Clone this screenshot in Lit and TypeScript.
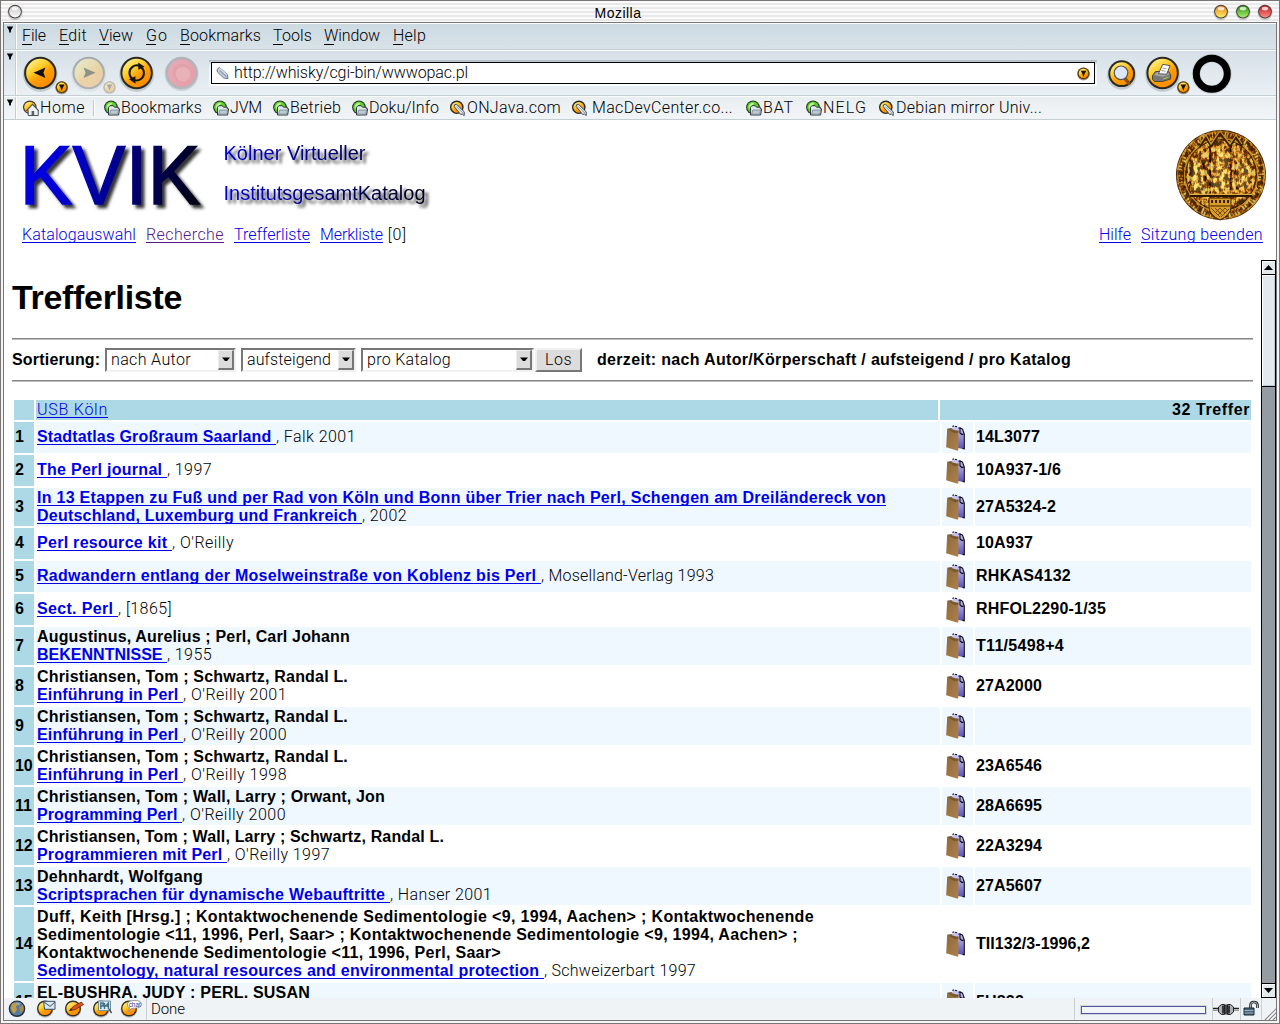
import { LitElement, html, css, svg, nothing } from "lit";
import { customElement, property } from "lit/decorators.js";

/* A run of text whose tracking is adjusted so that it fills a given advance width. */
@customElement("fit-text")
class FitText extends LitElement {
  @property({ type: Number }) w = 0;
  @property() text = "";
  static styles = css`
    :host { display: inline-block; white-space: pre; }
    .run { white-space: pre; }
  `;
  render() {
    return html`<span class="run">${this.text}</span>`;
  }
  updated() {
    const run = this.renderRoot.querySelector(".run") as HTMLElement;
    run.style.letterSpacing = "0px";
    const natural = run.getBoundingClientRect().width;
    if (this.w && this.text.length) {
      run.style.letterSpacing = `${(this.w - natural) / this.text.length}px`;
    }
  }
}

const fit = (text: string, w: number, cls = "") =>
  html`<fit-text class=${cls} .text=${text} .w=${w}></fit-text>`;

const defs = svg`
  <defs>
    <linearGradient id="shine" x1="0" y1="0" x2=".7" y2="1">
      <stop offset="0" stop-color="#fff9b0"/><stop offset=".4" stop-color="#ffd030"/>
      <stop offset=".65" stop-color="#ff9d00"/><stop offset="1" stop-color="#ff8a00"/>
    </linearGradient>
    <linearGradient id="rose" x1="0" y1="0" x2="1" y2="1">
      <stop offset="0" stop-color="#ee9aa6"/><stop offset="1" stop-color="#e8808e"/>
    </linearGradient>
  </defs>`;

const disc = (cx: number, cy: number, r: number, fill = "url(#shine)") => svg`
  <circle cx=${cx} cy=${cy + 1.5} r=${r + 1.2} fill="#7d8b95" opacity=".35"/>
  <circle cx=${cx} cy=${cy} r=${r} fill="#2b2a22"/>
  <circle cx=${cx} cy=${cy} r=${r - 2} fill=${fill}/>`;

const badge = (cx: number, cy: number) => svg`
  <circle cx=${cx} cy=${cy + 0.6} r="6.5" fill="#5a4a20" opacity=".5"/>
  <circle cx=${cx} cy=${cy} r="6" fill="#5c4310"/>
  <circle cx=${cx} cy=${cy} r="4.7" fill="url(#shine)"/>
  <path d="M${cx - 2.8} ${cy - 2.6}h5.6l-1.6 2.8l-1.2 3.4l-1.2-3.4z" fill="#111"/>`;

const backIcon = html`<svg class="tool" width="48" height="44" viewBox="22 51 48 44">${defs}
  ${disc(40.3, 73, 16.2)}<path d="M33.5 72.7L45.5 67.5L43.4 72.7L45.5 78z" fill="#111"/>${badge(61.7, 87.2)}</svg>`;
const forwardIcon = html`<svg class="tool" width="48" height="44" viewBox="70 51 48 44">${defs}
  <g opacity=".3">${disc(88.7, 73, 16.2)}${badge(109.5, 87.2)}</g>
  <path d="M95.5 72.7L83.5 67.5L85.6 72.7L83.5 78z" fill="#6f7a80" opacity=".75"/></svg>`;
const reloadIcon = html`<svg class="tool" width="46" height="44" viewBox="118 51 46 44">${defs}
  ${disc(136.6, 73, 16.2)}
  <g fill="none" stroke="#151515" stroke-width="2"><path d="M133 79.200A7.400 7.400 0 0 1 132.500 66.900Q135.500 64.500 139.500 65.800"/><path d="M140.300 66.700A7.400 7.400 0 0 1 140.900 79Q138 81.300 134 80.100"/></g>
  <path d="M138.200 62.400l6.300 4.400l-6.200 2.900z M135.500 83.700l-6.300-4.500l6.200-2.900z" fill="#151515"/></svg>`;
const stopIcon = html`<svg class="tool" width="47" height="44" viewBox="164 51 47 44">${defs}
  <g opacity=".75"><circle cx="181.6" cy="74" r="17" fill="#c3ccd1"/><circle cx="181.6" cy="73" r="16.2" fill="#a5a5a9"/>
  <circle cx="181.6" cy="73" r="13.600" fill="url(#rose)"/><circle cx="182" cy="73" r="9.300" fill="#df8c94"/>
  <circle cx="183" cy="74" r="7.300" fill="#eaa0a6"/></g></svg>`;
const searchIcon = html`<svg class="tool" width="45" height="44" viewBox="1099 51 45 44">${defs}
  ${disc(1121.7, 73.7, 13.4)}
  <path d="M1125 78.5l4 5" stroke="#8a5205" stroke-width="3.4" stroke-linecap="round"/>
  <circle cx="1121" cy="72.8" r="6.8" fill="#dbe6f8" stroke="#555" stroke-width="1.2"/></svg>`;
const printIcon = html`<svg class="tool" width="47" height="44" viewBox="1144 51 47 44">${defs}
  ${disc(1162.6, 73, 16.2)}
  <path d="M1152.5 75.5l3-4h13l2.2 3.4v4l-8 2.6h-8l-2.2-2z" fill="#777" stroke="#333" stroke-width=".8"/>
  <path d="M1154 75l3-3h11l1.5 2.4l-7 2.4z" fill="#a9a9a9"/>
  <path d="M1158.5 73.8l4.2-9.4l7.4 1.2l-3.4 8.6z" fill="#fff" stroke="#444" stroke-width=".9"/>
  <path d="M1162.5 68l4 .8M1161.5 70.5l4 .8" stroke="#888" stroke-width=".8"/>
  <path d="M1163 79l5.5-1.8" stroke="#9c4" stroke-width="1.1"/>${badge(1183.3, 87.2)}</svg>`;
const throbber = html`<svg class="tool" width="44" height="44" viewBox="1191 51 44 44">
  <circle cx="1211.8" cy="73.8" r="15.7" fill="none" stroke="#9aa" stroke-width="8.6" opacity=".35"/>
  <circle cx="1211.8" cy="73.8" r="15.5" fill="none" stroke="#000" stroke-width="7"/></svg>`;

const bookIcons: Record<string, unknown> = {
  home: html`<svg width="17" height="17" viewBox="0 0 17 17">${defs}
    <circle cx="6.8" cy="7.3" r="6.8" fill="#3a3a30"/><circle cx="6.8" cy="7.3" r="5.6" fill="url(#shine)"/>
    <path d="M4 10.3L9.5 4.6l5.7 5.7v5.2H5.2v-5z" fill="#eef2f5" stroke="#4b555c" stroke-width="1"/>
    <path d="M3.3 10.8L9.5 4.2l6.3 6.6" fill="none" stroke="#4b555c" stroke-width="1.1"/>
    <path d="M8.6 15v-4h2.6v4" fill="#59646c"/></svg>`,
  folder: html`<svg width="17" height="17" viewBox="0 0 17 17">
    <circle cx="7" cy="7.3" r="6.9" fill="#2c352b"/><circle cx="7" cy="7.3" r="5.8" fill="#5cce2a"/><path d="M2.500 7.300a4.600 4.600 0 0 1 6-4.200L4 9.300z" fill="#bdf58f"/>
    <path d="M4.500 15V7.200l1.400-1.500h3.300l1.300 1.500h3.800v1.600h1.300l-1 6.200z" fill="#dfe7ec" stroke="#303a41" stroke-width="1"/>
    <path d="M5.500 14.200L6.800 10h7.800l-.9 4.200z" fill="#bccad3" stroke="#6b7a84" stroke-width=".7"/></svg>`,
  link: html`<svg width="17" height="17" viewBox="0 0 17 17">${defs}
    <circle cx="6.8" cy="7.3" r="6.8" fill="#2c2a25"/><circle cx="6.8" cy="7.3" r="5.4" fill="url(#shine)"/>
    <path d="M4.200 6.600q-.4-2.600 2.400-2.200l7.600 7.400v3.800l-1.800-1.500l-1.800.3z" fill="#dfe8ee" stroke="#3d4a54" stroke-width="1"/>
    <path d="M6.400 6.600l6.400 6.400" stroke="#8fa2b0" stroke-width="1"/></svg>`,
};

const bagIcon = html`<svg class="bag" width="20" height="27" viewBox="0 0 20 27">
  <defs><linearGradient id="paper" x1="0" y1="0" x2="0" y2="1"><stop offset="0" stop-color="#cfcdf8"/><stop offset="1" stop-color="#5652b0"/></linearGradient>
  <linearGradient id="bag" x1="0" y1="0" x2="1" y2="1"><stop offset="0" stop-color="#8c693c"/><stop offset="1" stop-color="#b08149"/></linearGradient></defs>
  <path d="M6 4L7 1l7 1l4 6V24l-6-1V6z" fill="url(#paper)"/>
  <path d="M6.500 1.500l1.500-.8M9 1.200l2 .6M12.500 3.300l1.500-.5l2.500 1.400L18.300 9v14.800l-1.800-.4M14 3.500v4.500l2 1.500l1.500-.6" fill="none" stroke="#0b0a20" stroke-width="1.100"/>
  <path d="M1.200 3.800L12.400 5.600v19.200l-.8 1L.2 22.200z" fill="url(#bag)"/>
  <path d="M1.200 3.800l4.300-.9 7 2.900v1.600l-4 .8z" fill="#77592f"/><path d="M5.300 4l1.700-1.600 5 1.800-.6 1.600z" fill="#c9c3ee"/></svg>`;

const MENU: [string, number, number][] = [
  ["File", 24, 13], ["Edit", 28, 12], ["View", 34, 13], ["Go", 22, 12],
  ["Bookmarks", 81, 12], ["Tools", 39, 12], ["Window", 56, 13], ["Help", 33, 0],
];

/* icon, gap between icon and label, label, label width, gap after label */
const BOOKMARKS: [string, number, string, number, number][] = [
  ["folder", 0, "Bookmarks", 81, 11], ["folder", 0, "JVM", 32, 11],
  ["folder", 0, "Betrieb", 51, 11], ["folder", 0, "Doku/Info", 70, 11],
  ["link", 0, "ONJava.com", 94, 11], ["link", 3, "MacDevCenter.co...", 141, 13],
  ["folder", 0, "BAT", 31, 12], ["folder", 0, "NELG", 44, 12],
  ["link", 0, "Debian mirror Univ...", 146, 0],
];

interface Hit {
  n: number; h: number; authors?: [string, number][]; title: [string, number][];
  tail?: [string, number]; sig?: [string, number];
}
const HITS: Hit[] = [
  { n: 1, h: 31, title: [["Stadtatlas Großraum Saarland ", 239]], tail: [", Falk 2001", 80], sig: ["14L3077", 64] },
  { n: 2, h: 31, title: [["The Perl journal ", 130]], tail: [", 1997", 45], sig: ["10A937-1/6", 85] },
  { n: 3, h: 38, title: [["In 13 Etappen zu Fuß und per Rad von Köln und Bonn über Trier nach Perl, Schengen am Dreiländereck von", 849], ["Deutschland, Luxemburg und Frankreich ", 325]], tail: [", 2002", 45], sig: ["27A5324-2", 80] },
  { n: 4, h: 31, title: [["Perl resource kit ", 135]], tail: [", O'Reilly", 62], sig: ["10A937", 57] },
  { n: 5, h: 31, title: [["Radwandern entlang der Moselweinstraße von Koblenz bis Perl ", 504]], tail: [", Moselland-Verlag 1993", 173], sig: ["RHKAS4132", 95] },
  { n: 6, h: 31, title: [["Sect. Perl ", 81]], tail: [", [1865]", 54], sig: ["RHFOL2290-1/35", 130] },
  { n: 7, h: 38, authors: [["Augustinus, Aurelius ; Perl, Carl Johann", 313]], title: [["BEKENNTNISSE ", 130]], tail: [", 1955", 45], sig: ["T11/5498+4", 88] },
  { n: 8, h: 38, authors: [["Christiansen, Tom ; Schwartz, Randal L.", 311]], title: [["Einführung in Perl ", 146]], tail: [", O'Reilly 2001", 104], sig: ["27A2000", 66] },
  { n: 9, h: 38, authors: [["Christiansen, Tom ; Schwartz, Randal L.", 311]], title: [["Einführung in Perl ", 146]], tail: [", O'Reilly 2000", 104] },
  { n: 10, h: 38, authors: [["Christiansen, Tom ; Schwartz, Randal L.", 311]], title: [["Einführung in Perl ", 146]], tail: [", O'Reilly 1998", 104], sig: ["23A6546", 66] },
  { n: 11, h: 38, authors: [["Christiansen, Tom ; Wall, Larry ; Orwant, Jon", 348]], title: [["Programming Perl ", 145]], tail: [", O'Reilly 2000", 104], sig: ["28A6695", 66] },
  { n: 12, h: 38, authors: [["Christiansen, Tom ; Wall, Larry ; Schwartz, Randal L.", 407]], title: [["Programmieren mit Perl ", 190]], tail: [", O'Reilly 1997", 103], sig: ["22A3294", 66] },
  { n: 13, h: 38, authors: [["Dehnhardt, Wolfgang", 166]], title: [["Scriptsprachen für dynamische Webauftritte ", 353]], tail: [", Hanser 2001", 102], sig: ["27A5607", 66] },
  { n: 14, h: 74, authors: [["Duff, Keith [Hrsg.] ; Kontaktwochenende Sedimentologie <9, 1994, Aachen> ; Kontaktwochenende", 777], ["Sedimentologie <11, 1996, Perl, Saar> ; Kontaktwochenende Sedimentologie <9, 1994, Aachen> ;", 761], ["Kontaktwochenende Sedimentologie <11, 1996, Perl, Saar>", 464]], title: [["Sedimentology, natural resources and environmental protection ", 507]], tail: [", Schweizerbart 1997", 152], sig: ["TII132/3-1996,2", 114] },
  { n: 15, h: 38, authors: [["EL-BUSHRA, JUDY ; PERL, SUSAN", 273]], title: [], sig: ["5U832", 48] },
];

const titleButton = (id: string, top: string, bottom: string) => html`
  <svg width="16" height="18" viewBox="0 0 16 18"><defs><linearGradient id=${id} x1="0" y1="0" x2="0" y2="1">
    <stop offset="0" stop-color=${top}/><stop offset="1" stop-color=${bottom}/></linearGradient></defs>
    <circle cx="8" cy="9.6" r="7.6" fill="#aaa" opacity=".55"/><circle cx="8" cy="8.6" r="6.900" fill="#4a4440"/>
    <circle cx="8" cy="8.6" r="5.900" fill=${`url(#${id})`}/><ellipse cx="8" cy="5.6" rx="3.2" ry="1.9" fill="#fff" opacity=".75"/></svg>`;

const seal = html`<svg class="seal" width="92" height="92" viewBox="0 0 92 92">
  <defs>
    <radialGradient id="sealbase"><stop offset="0" stop-color="#d9a63a"/><stop offset=".65" stop-color="#bb7d1b"/><stop offset="1" stop-color="#8a4f08"/></radialGradient>
    <filter id="grain" x="0" y="0" width="1" height="1" color-interpolation-filters="sRGB">
      <feTurbulence type="fractalNoise" baseFrequency=".26 .17" numOctaves="3" seed="8" result="t"/>
      <feColorMatrix in="t" type="matrix" values="4.600 0 0 0 -1.600  4.200 0 0 0 -1.700  2.400 0 0 0 -1.100  0 0 0 0 1" result="c"/>
      <feComposite in="c" in2="SourceGraphic" operator="in"/>
    </filter>
  </defs>
  <circle cx="46" cy="46" r="45" fill="#4b2903"/>
  <circle cx="46" cy="46" r="44.3" fill="url(#sealbase)"/>
  <g fill="#f0d468" opacity=".85"><circle cx="46" cy="24" r="4"/><path d="M41 29h11l3 31H38z"/><circle cx="22" cy="33" r="3.500"/><path d="M18 37h8l4 25H17z"/><circle cx="69" cy="31" r="3.500"/><path d="M65 35h8l3 24H61z"/></g>
  <g stroke="#4d2a05" stroke-width="2" fill="none"><path d="M35 14v50M56 14v50M28 34l3 12-2 16M61 34l-2 12 3 14M15 34v26"/></g>
  <circle cx="46" cy="46" r="44.3" fill="#fff" filter="url(#grain)" opacity=".6"/>
  <circle cx="46" cy="46" r="40.5" fill="none" stroke="#4a2804" stroke-width="5" stroke-dasharray="1.3 1.8" opacity=".75"/>
  <circle cx="46" cy="46" r="43.4" fill="none" stroke="#c98b1e" stroke-width="1" opacity=".8"/>
  <circle cx="46" cy="46" r="36.5" fill="none" stroke="#c98b1e" stroke-width="1.2"/>
  <circle cx="46" cy="46" r="35.3" fill="none" stroke="#3e2002" stroke-width="1"/>
  <path d="M25 17L31 8l5 9 9-13 10 13 6-9 6 9" fill="none" stroke="#3a1e02" stroke-width="2.4"/>
  <path d="M25 15L31 6l5 9 9-13 10 13 6-9 6 9" fill="none" stroke="#c8932c" stroke-width="1.2"/>
  <path d="M15 67h62" stroke="#2e1701" stroke-width="2"/><path d="M15 65.4h62" stroke="#e0ae3c" stroke-width="1.2"/>
  <path d="M34 69h22v9q0 8-11 13q-11-5-11-13z" fill="#d99c27" stroke="#3b1e02" stroke-width="1"/>
  <path d="M35 77h20" stroke="#3b1e02"/><path d="M36 72.500h18" stroke="#3b1e02" stroke-width="3" stroke-dasharray="2 2"/>
  <path d="M36 79l9 9M40 79l7 7M45 79l5 5M50 79l3 3M54 80l-8 8M50 79l-7 7M45 79l-5 5" stroke="#5b3506" stroke-width=".8"/></svg>`;

const statusDisc = svg`<circle cx="9" cy="10.4" r="8.3" fill="#8f8f8a" opacity=".5"/><circle cx="9" cy="9.5" r="8" fill="#39301d"/><circle cx="9" cy="9.5" r="6.6" fill="url(#shine)"/>`;
const statusIcons = [
  html`<svg width="28" height="20" viewBox="0 0 28 20"><circle cx="9" cy="9.8" r="8.3" fill="#24303e"/><circle cx="9" cy="9.6" r="7" fill="#567ba3"/>
    <path d="M4 4.8q4-2 6 0l-2 3 1 3-3 4q-3-3-3.4-6z" fill="#c39a4a"/><path d="M11 8l4-2 .6 5-3 3.400z" fill="#a78b4c"/><path d="M8 3.400l5 1-3 2z" fill="#8fb2cf"/></svg>`,
  html`<svg width="28" height="20" viewBox="0 0 28 20">${defs}${statusDisc}<path d="M7.500 2.300h11.500v8H8.600z" fill="#d9e6f0" stroke="#3c5163"/><path d="M8 3l6 4.400L19 3" fill="none" stroke="#3c5163"/></svg>`,
  html`<svg width="28" height="20" viewBox="0 0 28 20">${defs}${statusDisc}<path d="M6 11.400l3.200-3.800L17.400 3l2.200 2.400-8.400 5.200z" fill="#dc5426" stroke="#6e2508" stroke-width=".8"/><path d="M5 12l2-3 1.800 2z" fill="#332"/></svg>`,
  html`<svg width="28" height="20" viewBox="0 0 28 20">${defs}${statusDisc}<path d="M6.500 2h12v9.600h-12z" fill="#d9ebf1" stroke="#6f8fa0"/><path d="M8.800 10V4h2.400v3H9M12.500 10V4M13 7h4M16.400 10V4l-2.400 3" stroke="#466f86" stroke-width="1.400" fill="none"/><path d="M17 10l2.600 4" stroke="#456" stroke-width="1.400"/></svg>`,
  html`<svg width="26" height="20" viewBox="0 0 26 20">${defs}${statusDisc}<path d="M8 13l2-4q-3-1-2.600-4Q8 1.600 14.600 1.500t7 3.800q-.4 3.700-7 3.900l-3 .2z" fill="#fdfdff" stroke="#999"/>
    <text x="8.700" y="7.600" font-size="6.400" textLength="12" fill="#3f3d86" font-family="Liberation Sans, sans-serif">chat</text></svg>`,
];

@customElement("app-root")
class AppRoot extends LitElement {
  static styles = css`
    :host { display: block; width: 1280px; height: 1024px; overflow: hidden; font-family: Roboto, "Liberation Sans", Arial, sans-serif; font-weight: 300; font-size: 16px; color: #000; }
    * { box-sizing: border-box; }
    svg { display: block; flex: none; }
    .window { width: 1280px; height: 1024px; border: 1px solid #7a7676; background: #f4f4f4; display: flex; flex-direction: column; }
    .titlebar { height: 21px; flex: none; display: flex; justify-content: space-between; padding: 2px 6px 0 6px;
      background: repeating-linear-gradient(#fbfbfb 0 2px, #e9e9e9 2px 4px); }
    .titlebar .caption { font-family: "Liberation Sans", Arial, sans-serif; font-weight: 400; font-size: 14px; line-height: 20px; padding-right: 44px; }
    .titlebar .group { display: flex; gap: 6px; width: 62px; }
    .titlebar .group.end { justify-content: flex-end; }
    .frame { flex: 1; margin: 0 2px 2px; border: 1px solid #7a7676; border-top: 1px solid #77777a; display: flex; flex-direction: column; overflow: hidden; background: #fff; min-height: 0; }
    .bar { display: flex; flex: none; border-bottom: 1px solid #c3cfd3; border-top: 1px solid #fbfdfd; }
    .grip { width: 11px; flex: none; border-right: 1px solid #c3cfd3; margin-left: 1px; }
    .grip svg { margin: 2px 0 0 1px; }
    .barbody { flex: 1; display: flex; align-items: center; border-left: 1px solid #fff; padding-left: 5px; }
    .menubar { height: 27px; background: linear-gradient(#cddae2, #d8e2e8); }
    .toolbar { height: 46px; background: linear-gradient(#d7e0e8, #eaf0f4); }
    .bookbar { height: 24px; background: linear-gradient(#e9eef1, #f2f5f7); }
    .menubar .barbody { align-items: flex-start; }
    .menuitem { line-height: 24px; height: 25px; }
    .menuitem .stroke { display: block; height: 1px; width: 10px; background: #000; margin-top: -4px; }
    .url { height: 26px; width: 888px; margin: 0 2px 0 -2px; padding: 2px; background: linear-gradient(#aeb7bc, #eef3f6 20%, #fafcfd); flex: none; }
    .urlbox { height: 22px; border: 1px solid #000; background: #fff; display: flex; align-items: center; padding: 0 2px 0 4px; }
    .urlbox .addr { flex: 1; padding-left: 4px; line-height: 20px; }
    .toolbody { padding-left: 5px; }
    .books { padding-left: 6px; }
    .book { display: flex; align-items: center; line-height: 22px; }
    .sep { width: 2px; height: 16px; border-left: 1px solid #c2ccd0; margin: 0 9px 0 8px; border-right: 1px solid #fff; }
    .page { flex: 1; min-height: 0; display: flex; flex-direction: column; }
    .head { height: 140px; flex: none; display: flex; justify-content: space-between; }
    .headleft { display: flex; flex-direction: column; }
    .nav { display: flex; padding-left: 18px; line-height: 18px; margin-top: -1px; }
    .headright { display: flex; flex-direction: column; align-items: flex-end; padding: 9px 13px 0 0; }
    .headright .seal { margin-right: -4px; }
    .headright .nav { margin-top: 5px; gap: 10px; }
    .link { color: #0000e8; text-decoration: underline; text-underline-offset: 2px; text-decoration-thickness: 1px; text-decoration-skip-ink: none; }
    .link.visited { color: #551a8b; }
    .lower { flex: 1; min-height: 0; display: flex; }
    .doc { flex: 1; padding: 0 8px 0 8px; overflow: hidden; }
    h1 { margin: 18px 0 0; font-family: "Liberation Sans", Arial, sans-serif; font-size: 34px; line-height: 38px; height: 60px; font-weight: bold; }
    .rule { height: 2px; background: linear-gradient(#888 0 1px, #bdbdbd 1px 2px); }
    .sort { display: flex; height: 40px; padding-top: 8px; line-height: 23px; }
    .select { height: 24px; border: 2px solid; border-color: #777 #f1f1f1 #f1f1f1 #777; background: #fff; display: flex; justify-content: space-between; padding-left: 4px; line-height: 20px; }
    .drop { width: 16px; height: 20px; background: #dcdcdc; border: 1px solid #eee; border-right: 2px solid #777; border-bottom: 2px solid #777; display: flex; align-items: center; justify-content: center; }
    .go { width: 47px; height: 24px; background: #dcdcdc; border: 2px solid; border-color: #f1f1f1 #777 #777 #f1f1f1; line-height: 20px; text-align: center; }
    .table { display: grid; gap: 2px; margin: 18px 0 0 2px; }
    .row { display: grid; grid-template-columns: 20px 904px 31px 276px; gap: 2px; }
    .row.header { grid-template-columns: 20px 902px 311px; height: 20px; line-height: 19px; }
    .header > div { background: #add8e6; }
    .header .cell { padding-left: 1px; line-height: 20px; }
    .header .count { text-align: right; padding-right: 1px; }
    .num { background: #add8e6; display: flex; align-items: center; padding: 0 0 1px 1px; letter-spacing: -.1px; }
    .odd > .cell { background: #eff7ff; }
    .cell { line-height: 18px; }
    .text { padding-left: 1px; display: flex; flex-direction: column; justify-content: center; }
    .single { padding-bottom: 2px; }
    .top { justify-content: flex-start; padding-top: 1px; }
    .line { display: flex; height: 18px; }
    .bold, .num, .count, .sig { font-family: "Liberation Sans", Arial, sans-serif; font-weight: bold; }
    .pic { display: flex; align-items: center; padding: 1px 0 0 4px; }
    .sig { display: flex; align-items: center; padding: 0 0 1px 1px; }
    .scroll { width: 15px; flex: none; background: #949ba3; border-left: 1px solid #000; border-right: 1px solid #000; display: flex; flex-direction: column; }
    .sbtn { height: 15px; flex: none; background: #e1e9ec; border: 1px solid #000; border-left: 0; border-right: 0; display: flex; align-items: center; justify-content: center; box-shadow: inset 1px 1px #fff; }
    .thumb { height: 112px; background: #e1e9ec; border-bottom: 1px solid #000; box-shadow: inset 1px 1px #fff, inset -1px -1px #b9cbd6; }
    .grow { flex: 1; }
    .status { height: 22px; flex: none; background: #eff3f6; display: flex; align-items: center; padding-left: 4px; font-size: 15px; }
    .done { border-left: 1px solid #c5d0d4; padding-left: 4px; line-height: 23px; height: 22px; flex: 1; }
    .panel { border-left: 1px solid #c5d0d4; height: 22px; display: flex; align-items: center; flex: none; }
    .panel.load { width: 138px; }
    .panel.net { width: 28px; }
    .panel.lock { width: 21px; }
    .panel.size { width: 15px; }
    .progress { width: 125px; height: 8px; border: 1px solid #5252a0; background: #f2f6f8; margin: 2px 0 0 6px; outline: 1px solid #d0dadd; }
  `;

  grip() {
    return html`<div class="grip"><svg width="8" height="7" viewBox="0 0 8 7"><path d="M.8 .5h6.400L5 4.200L4.800 6.500H3.200L3 4.200z" fill="#000"/></svg></div>`;
  }

  select(text: string, w: number, width: string, mr: string) {
    return html`<div class="select" style="width:${width};margin-right:${mr}">${fit(text, w)}
      <span class="drop"><svg width="8" height="5" viewBox="0 0 8 5"><path d="M0 .5h8L5 4H3z" fill="#000"/></svg></span></div>`;
  }

  hit(h: Hit) {
    const align = h.n === 15 ? "top" : h.h === 31 ? "single" : "";
    return html`<div class="row ${h.n % 2 ? "odd" : ""}" style="height:${h.h}px">
      <div class="num">${h.n}</div>
      <div class="cell text ${align}">
        ${(h.authors ?? []).map(([t, w]) => html`<div class="line bold">${fit(t, w)}</div>`)}
        ${h.title.map(([t, w], i) => html`<div class="line">${fit(t, w, "link bold")}${
          i === h.title.length - 1 && h.tail ? fit(h.tail[0], h.tail[1]) : nothing}</div>`)}
      </div>
      <div class="cell pic">${bagIcon}</div>
      <div class="cell sig">${h.sig ? fit(h.sig[0], h.sig[1]) : nothing}</div>
    </div>`;
  }

  render() {
    return html`<div class="window">
      <div class="titlebar">
        <div class="group">${titleButton("tb0", "#c9c9c9", "#f8f8f8")}</div>
        <div class="caption">${fit("Mozilla", 47)}</div>
        <div class="group end">${titleButton("tb1", "#e87a28", "#fff05a")}${titleButton("tb2", "#2e8f12", "#a8f06a")}${titleButton("tb3", "#c01c24", "#ff8a80")}</div>
      </div>
      <div class="frame">
        <div class="bar menubar">${this.grip()}<div class="barbody">
          ${MENU.map(([t, w, gap]) => html`<div class="menuitem" style="margin-right:${gap}px">${fit(t, w)}<span class="stroke"></span></div>`)}
        </div></div>
        <div class="bar toolbar">${this.grip()}<div class="barbody toolbody">
          ${backIcon}${forwardIcon}${reloadIcon}${stopIcon}
          <div class="url"><div class="urlbox">
            <svg width="14" height="14" viewBox="0 0 14 14"><path d="M1 3.500L3.400 1.400l8 7.200.6 4-4.300-.6L1.400 6z" fill="#c3d0dc" stroke="#566878" stroke-width=".9"/><path d="M4 4.500l6 6" stroke="#667a8c"/><path d="M3.500 2l7 6.500" stroke="#fff" stroke-width=".7"/></svg>
            <span class="addr">${fit("http://whisky/cgi-bin/wwwopac.pl", 234)}</span>
            <svg width="16" height="16" viewBox="0 0 16 16">${defs}${badge(7.5, 8.4)}</svg>
          </div></div>
          ${searchIcon}${printIcon}${throbber}
        </div></div>
        <div class="bar bookbar">${this.grip()}<div class="barbody books">
          <div class="book">${bookIcons.home}${fit("Home", 45)}</div><span class="sep"></span>
          ${BOOKMARKS.map(([icon, pad, t, w, gap]) => html`<div class="book" style="gap:${pad}px;margin-right:${gap}px">${bookIcons[icon]}${fit(t, w)}</div>`)}
        </div></div>
        <div class="page">
          <div class="head">
            <div class="headleft">
              <svg width="450" height="107" viewBox="4 120 450 107">
                <defs><linearGradient id="kv" gradientUnits="userSpaceOnUse" x1="24" y1="160" x2="203" y2="200"><stop offset="0" stop-color="#0000e6"/><stop offset=".25" stop-color="#0000cf"/><stop offset="1" stop-color="#000008"/></linearGradient>
                <linearGradient id="kt" gradientUnits="userSpaceOnUse" x1="225" y1="0" x2="425" y2="0"><stop offset="0" stop-color="#0000d4"/><stop offset="1" stop-color="#000018"/></linearGradient>
                <filter id="sh" x="-10%" y="-20%" width="125%" height="150%"><feDropShadow dx="3.500" dy="3.500" stdDeviation="1.800" flood-color="#000" flood-opacity=".8"/></filter></defs>
                <g font-family="Liberation Sans, Arial, sans-serif" font-weight="400" filter="url(#sh)">
                <text x="19.500" y="203.500" font-size="83" textLength="181" lengthAdjust="spacingAndGlyphs" fill="url(#kv)" stroke="url(#kv)" stroke-width="1.400">KVIK</text>
                <text x="223.500" y="160" font-size="20" textLength="142" fill="url(#kt)">Kölner Virtueller</text>
                <text x="223.500" y="200" font-size="20" textLength="202" fill="url(#kt)">InstitutsgesamtKatalog</text></g>
              </svg>
              <div class="nav">${fit("Katalogauswahl", 114, "link")}${fit("  ", 10)}${fit("Recherche", 78, "link visited")}${fit("  ", 10)}${fit("Trefferliste", 76, "link")}${fit("  ", 10)}${fit("Merkliste", 63, "link")}${fit(" [0]", 24)}</div>
            </div>
            <div class="headright">${seal}<div class="nav">${fit("Hilfe", 32, "link")}${fit("Sitzung beenden", 122, "link")}</div></div>
          </div>
          <div class="lower">
            <div class="doc">
              <h1>${fit("Trefferliste", 170)}</h1>
              <div class="rule"></div>
              <div class="sort">${fit("Sortierung: ", 93, "bold")}
                ${this.select("nach Autor", 80, "131px", "5px")}${this.select("aufsteigend", 84, "115px", "5px")}${this.select("pro Katalog", 84, "173px", "1px")}
                <div class="go">${fit("Los", 27)}</div><span style="width:15px"></span>
                ${fit("derzeit: nach Autor/Körperschaft / aufsteigend / pro Katalog", 474, "bold")}
              </div>
              <div class="rule"></div>
              <div class="table">
                <div class="row header"><div></div><div class="cell">${fit("USB Köln", 71, "link")}</div><div class="count">${fit("32 Treffer", 78)}</div></div>
                ${HITS.map((h) => this.hit(h))}
              </div>
            </div>
            <div class="scroll">
              <div class="sbtn"><svg width="9" height="5" viewBox="0 0 9 5"><path d="M4.500 0L9 5H0z" fill="#000"/></svg></div>
              <div class="thumb"></div><div class="grow"></div>
              <div class="sbtn"><svg width="9" height="5" viewBox="0 0 9 5"><path d="M4.500 5L9 0H0z" fill="#000"/></svg></div>
            </div>
          </div>
        </div>
        <div class="status">
          ${statusIcons}<div class="done">${fit("Done", 34)}</div>
          <div class="panel load"><span class="progress"></span></div>
          <div class="panel net"><svg width="26" height="16" viewBox="0 0 26 16"><path d="M0 7.500h8M18 7.500h8" stroke="#222" stroke-width="1.300"/><path d="M0 9.500h8M18 9.500h8" stroke="#999"/>
            <path d="M5.500 6l3-2.500h3v10h-3l-3-2.500zM20.500 6l-3-2.500h-3v10h3l3-2.500z" fill="#aab2b6" stroke="#222"/><path d="M13 3.500v10M10 4.500v8M16 4.500v8" stroke="#111" stroke-width="1.500"/></svg></div>
          <div class="panel lock"><svg width="20" height="18" viewBox="0 0 20 18"><path d="M9.500 8V5q0-3 3.400-3T16.500 5v3" fill="none" stroke="#222" stroke-width="2.600"/><path d="M9.500 8V5q0-3 3.400-3T16.500 5v3" fill="none" stroke="#cfd8dc" stroke-width=".8"/><path d="M3 8h10v7H3z" fill="#4c6a7c" stroke="#16242e"/><path d="M3.500 10.500h9M3.500 13h9" stroke="#8fa9b8"/></svg></div>
          <div class="panel size"><svg width="15" height="22" viewBox="1 0 15 22"><path d="M4 22L16 10M8 22l8-8M12 22l4-4" stroke="#888" stroke-width="1.200"/><path d="M5.500 22L16 11.500M9.500 22l6.500-6.500" stroke="#fff" stroke-width=".8"/></svg></div>
        </div>
      </div>
    </div>`;
  }
}
